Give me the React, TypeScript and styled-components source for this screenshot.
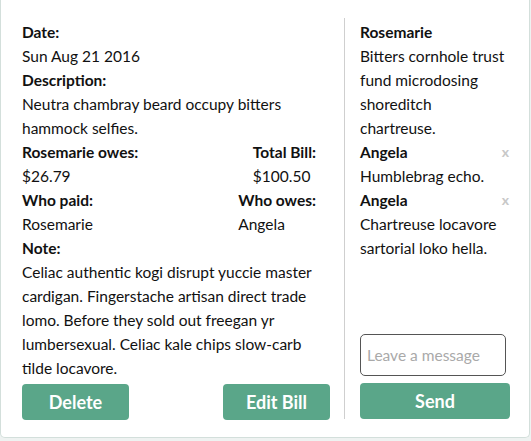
import styled, { createGlobalStyle } from 'styled-components';

const GlobalStyle = createGlobalStyle`
  body {
    margin: 0;
    background-color: #eef2f1;
    font-family: 'Lato', 'Noto Sans', sans-serif;
    color: #111;
  }
`;

const Card = styled.div`
  width: 530px;
  height: 438px;
  box-sizing: border-box;
  background-color: #fff;
  border: 1px solid #d3dfdb;
  border-top: none;
  border-radius: 0 0 5px 5px;
  padding: 18px 0 18px 21px;
  display: flex;
`;

const BillPanel = styled.div`
  width: 308px;
  margin-right: 14px;
  display: flex;
  flex-direction: column;
`;

const Details = styled.div`
  padding: 2px 14px 0 0;
  font-size: 15.5px;
  line-height: 24px;
`;

const Label = styled.div`
  font-weight: 700;
`;

const Value = styled.div``;

const Pair = styled.div`
  display: flex;
  justify-content: space-between;
`;

const ButtonRow = styled.div`
  display: flex;
  justify-content: space-between;
  margin-top: 4px;
`;

const Button = styled.button<{ wide?: boolean }>`
  width: ${props => (props.wide ? '150px' : '107px')};
  height: 36px;
  padding: 0;
  border: none;
  border-radius: 4px;
  background-color: #5aa689;
  color: #fff;
  font-family: inherit;
  font-size: 18px;
  font-weight: 700;
  cursor: pointer;
`;

const ChatPanel = styled.div`
  flex: 1;
  border-left: 1px solid #cfcfcf;
  padding: 2px 18px 0 15px;
  display: flex;
  flex-direction: column;
`;

const Messages = styled.div`
  flex: 1;
  font-size: 15.5px;
  line-height: 24px;
`;

const MessageHead = styled.div`
  display: flex;
  justify-content: space-between;
  font-weight: 700;
`;

const MessageText = styled.div`
  max-width: 146px;
`;

const Remove = styled.span`
  color: #c8c8c8;
  font-size: 14px;
  font-weight: 700;
  padding-right: 2px;
  cursor: pointer;
`;

const Input = styled.input`
  width: 146px;
  height: 42px;
  box-sizing: border-box;
  border: 1px solid #555;
  border-radius: 5px;
  padding: 0 6px;
  margin-bottom: 7px;
  font-family: inherit;
  font-size: 15.5px;
  &::placeholder {
    color: #a9a9a9;
  }
`;

const messages = [
  { author: 'Rosemarie', text: 'Bitters cornhole trust fund microdosing shoreditch chartreuse.', own: true },
  { author: 'Angela', text: 'Humblebrag echo.', own: false },
  { author: 'Angela', text: 'Chartreuse locavore sartorial loko hella.', own: false },
];

export default function App() {
  return (
    <>
      <GlobalStyle />
      <Card>
        <BillPanel>
          <Details>
            <Label>Date:</Label>
            <Value>Sun Aug 21 2016</Value>
            <Label>Description:</Label>
            <Value>Neutra chambray beard occupy bitters hammock selfies.</Value>
            <Pair>
              <div>
                <Label>Rosemarie owes:</Label>
                <Value>$26.79</Value>
              </div>
              <div>
                <Label>Total Bill:</Label>
                <Value>$100.50</Value>
              </div>
            </Pair>
            <Pair>
              <div>
                <Label>Who paid:</Label>
                <Value>Rosemarie</Value>
              </div>
              <div>
                <Label>Who owes:</Label>
                <Value>Angela</Value>
              </div>
            </Pair>
            <Label>Note:</Label>
            <Value>
              Celiac authentic kogi disrupt yuccie master cardigan. Fingerstache artisan direct trade
              lomo. Before they sold out freegan yr lumbersexual. Celiac kale chips slow-carb tilde
              locavore.
            </Value>
          </Details>
          <ButtonRow>
            <Button>Delete</Button>
            <Button>Edit Bill</Button>
          </ButtonRow>
        </BillPanel>
        <ChatPanel>
          <Messages>
            {messages.map((m, i) => (
              <div key={i}>
                <MessageHead>
                  <span>{m.author}</span>
                  {!m.own && <Remove>x</Remove>}
                </MessageHead>
                <MessageText>{m.text}</MessageText>
              </div>
            ))}
          </Messages>
          <Input placeholder="Leave a message" />
          <Button wide>Send</Button>
        </ChatPanel>
      </Card>
    </>
  );
}
